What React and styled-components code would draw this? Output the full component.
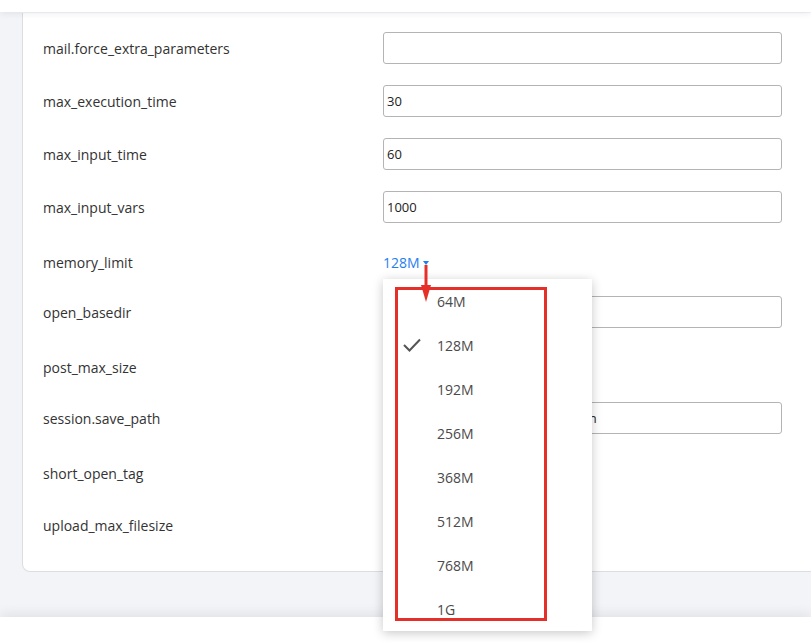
import React from "react";
import styled, { createGlobalStyle } from "styled-components";

const GlobalStyle = createGlobalStyle`
  html, body { margin: 0; padding: 0; }
  body {
    background: #f3f4f7;
    font-family: "Open Sans", "Noto Sans", "Liberation Sans", sans-serif;
    color: #333;
  }
  * { box-sizing: border-box; }
`;

const Page = styled.div`
  width: 811px;
  height: 643px;
  display: flex;
  flex-direction: column;
  overflow: hidden;
  background: #f3f4f7;
`;

const Header = styled.div`
  height: 12px;
  flex: none;
  background: #fff;
  box-shadow: 0 2px 6px rgba(0, 0, 0, 0.07);
  position: relative;
  z-index: 2;
`;

const Main = styled.div`
  flex: 1;
  padding: 1px 0 45px 22px;
  display: flex;
  flex-direction: column;
`;

const Card = styled.div`
  flex: 1;
  width: 820px;
  background: #fff;
  border: 1px solid #dcdde0;
  border-top: none;
  border-radius: 0 0 0 8px;
  padding: 19px 0 0 20px;
  display: flex;
  flex-direction: column;
`;

const Row = styled.div`
  display: flex;
  align-items: center;
  height: 32px;
  margin-top: ${(p) => p.$gap}px;
  position: relative;
`;

const Label = styled.div`
  width: 340px;
  flex: none;
  font-size: 14px;
  color: #333;
`;

const Input = styled.div`
  width: 399px;
  height: 32px;
  border: 1px solid #b4b4b4;
  border-radius: 3px;
  padding: 0 3px;
  display: flex;
  align-items: center;
  font-size: 13px;
  color: #222;
  background: #fff;
  white-space: nowrap;
  overflow: hidden;
`;

const ValueWrap = styled.div`
  position: relative;
  height: 32px;
  display: flex;
  align-items: center;
`;

const LinkValue = styled.span`
  font-size: 14px;
  color: #1e80f0;
  display: inline-flex;
  align-items: center;
  gap: 3px;
  cursor: pointer;
`;

const Caret = styled.span`
  width: 0;
  height: 0;
  border-left: 3.5px solid transparent;
  border-right: 3.5px solid transparent;
  border-top: 4px solid #1e80f0;
  margin-top: 2px;
`;

const Menu = styled.div`
  position: absolute;
  top: 33px;
  left: 0;
  width: 209px;
  background: #fff;
  box-shadow: 0 2px 10px rgba(0, 0, 0, 0.22);
  z-index: 5;
`;

const Item = styled.div`
  height: 44px;
  display: flex;
  align-items: center;
  padding-left: 54px;
  position: relative;
  font-size: 14px;
  color: #4a4a4a;
`;

const Check = styled.svg`
  position: absolute;
  left: 20px;
  top: 15px;
`;

const Annotation = styled.div`
  position: absolute;
  left: 12px;
  top: 8px;
  width: 152px;
  height: 334px;
  border: 3px solid #e53029;
  pointer-events: none;
`;

const Arrow = styled.svg`
  position: absolute;
  left: 37px;
  top: 19px;
  z-index: 6;
`;

const Footer = styled.div`
  height: 26px;
  flex: none;
  background: #fff;
  box-shadow: 0 -4px 12px rgba(0, 0, 0, 0.07);
  position: relative;
`;

const options = ["64M", "128M", "192M", "256M", "368M", "512M", "768M", "1G"];

const rows = [
  { label: "mail.force_extra_parameters", input: "", gap: 0 },
  { label: "max_execution_time", input: "30", gap: 21 },
  { label: "max_input_time", input: "60", gap: 21 },
  { label: "max_input_vars", input: "1000", gap: 21 },
  { label: "memory_limit", dropdown: "128M", gap: 23 },
  { label: "open_basedir", input: "", gap: 18 },
  { label: "post_max_size", text: true, gap: 23 },
  { label: "session.save_path", input: "/var/www/vhosts/domains/session", gap: 19 },
  { label: "short_open_tag", text: true, gap: 23 },
  { label: "upload_max_filesize", text: true, gap: 20 },
];

function MemoryDropdown({ value }) {
  return (
    <ValueWrap>
      <LinkValue>
        {value}
        <Caret />
      </LinkValue>
      <Arrow width="12" height="40" viewBox="0 0 12 40">
        <line x1="6" y1="0" x2="6" y2="22" stroke="#e53029" strokeWidth="3" />
        <polygon points="1,20 11,20 6,37" fill="#e53029" />
      </Arrow>
      <Menu>
        {options.map((o) => (
          <Item key={o}>
            {o === value && (
              <Check width="18" height="14" viewBox="0 0 18 14">
                <polyline
                  points="1,7 6.5,12.5 17,1.5"
                  fill="none"
                  stroke="#555"
                  strokeWidth="2"
                />
              </Check>
            )}
            {o}
          </Item>
        ))}
        <Annotation />
      </Menu>
    </ValueWrap>
  );
}

export default function App() {
  return (
    <>
      <GlobalStyle />
      <Page>
        <Header />
        <Main>
          <Card>
            {rows.map((r) => (
              <Row key={r.label} $gap={r.gap}>
                <Label>{r.label}</Label>
                {r.dropdown ? (
                  <MemoryDropdown value={r.dropdown} />
                ) : r.text ? null : (
                  <Input>{r.input}</Input>
                )}
              </Row>
            ))}
          </Card>
        </Main>
        <Footer />
      </Page>
    </>
  );
}
